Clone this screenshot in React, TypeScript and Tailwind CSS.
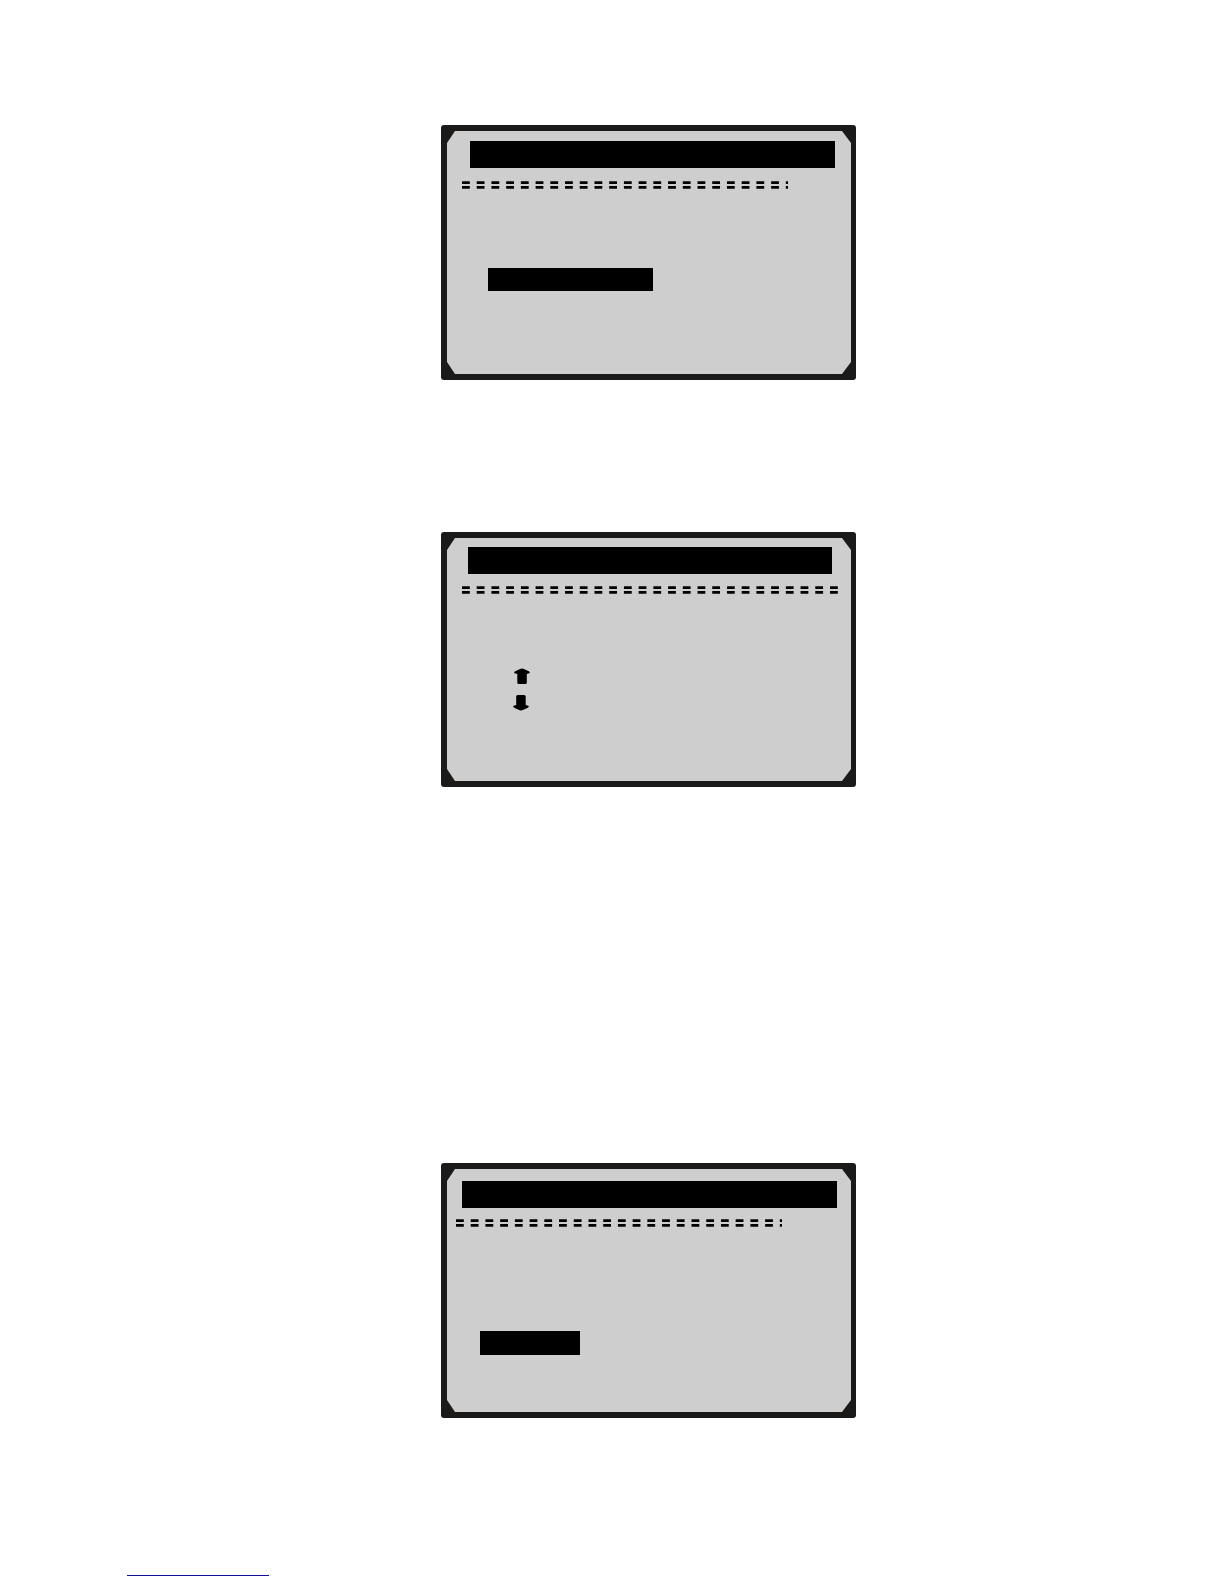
import type { ReactNode } from 'react';

// LCD frame with cut corners
function Screen({ className, children }: { className: string; children: ReactNode }) {
  return (
    <section className="w-full max-w-[415px] rounded-[3px] bg-[#1b1a18] py-[6px] pl-[6px] pr-[5px]">
      <div
        className={`flex flex-col items-start bg-[#cecece] [clip-path:polygon(8px_0,calc(100%-9px)_0,100%_12px,100%_calc(100%-12px),calc(100%-9px)_100%,8px_100%,0_calc(100%-12px),0_12px)] ${className}`}
      >
        {children}
      </div>
    </section>
  );
}

// Double dashed rule, clipped at its own width
function DoubleRule({ width, className }: { width: number; className: string }) {
  return (
    <svg width={width} height="8" className={className} aria-hidden="true">
      <path
        d={`M0 1.6H${width}M0 6.4H${width}`}
        stroke="#000"
        strokeWidth="2.7"
        strokeDasharray="7.8 6.92"
      />
    </svg>
  );
}

function Arrow({ className }: { className: string }) {
  return (
    <svg width="16" height="16" viewBox="0 0 16 16" className={className} aria-hidden="true">
      <path d="M8 .5Q9 .5 10.5 1.2L14.8 3.3Q16 4 15.8 4.8Q15.6 5.4 14.4 5.4L12.8 6V14.4Q12.8 15.9 11.4 15.9H4.8Q3.3 15.9 3.3 14.4V6L1.6 5.4Q.4 5.4 .2 4.8Q0 4 1.2 3.3L5.5 1.2Q7 .5 8 .5Z" />
    </svg>
  );
}

export default function App() {
  return (
    <div className="min-h-screen bg-white">
      <main className="flex flex-col items-center pl-[73px] pt-[125px]">
        <Screen className="pt-[10px] pb-[83px]">
          <div className="ml-[23px] h-[27px] w-[365px] bg-black" />
          <DoubleRule width={326} className="mt-[13px] ml-[15px]" />
          <div className="mt-[79px] ml-[41px] h-[23px] w-[165px] bg-black" />
        </Screen>

        <div className="h-[152px]" />

        <Screen className="pt-[9px] pb-[70px]">
          <div className="ml-[21px] h-[27px] w-[364px] bg-black" />
          <DoubleRule width={376} className="mt-[12px] ml-[15px]" />
          <Arrow className="mt-[74px] ml-[67px]" />
          <Arrow className="mt-[11px] ml-[66px] rotate-180" />
        </Screen>

        <div className="h-[376px]" />

        <Screen className="pt-[12px] pb-[57px]">
          <div className="ml-[15px] h-[27px] w-[375px] bg-black" />
          <DoubleRule width={326} className="mt-[11px] ml-[9px]" />
          <div className="mt-[104px] ml-[33px] h-[24px] w-[100px] bg-black" />
        </Screen>
      </main>

      <footer className="pt-[157px] pb-2 pl-[127px]">
        <div className="h-px w-[142px] bg-[#1010a0]" />
      </footer>
    </div>
  );
}
